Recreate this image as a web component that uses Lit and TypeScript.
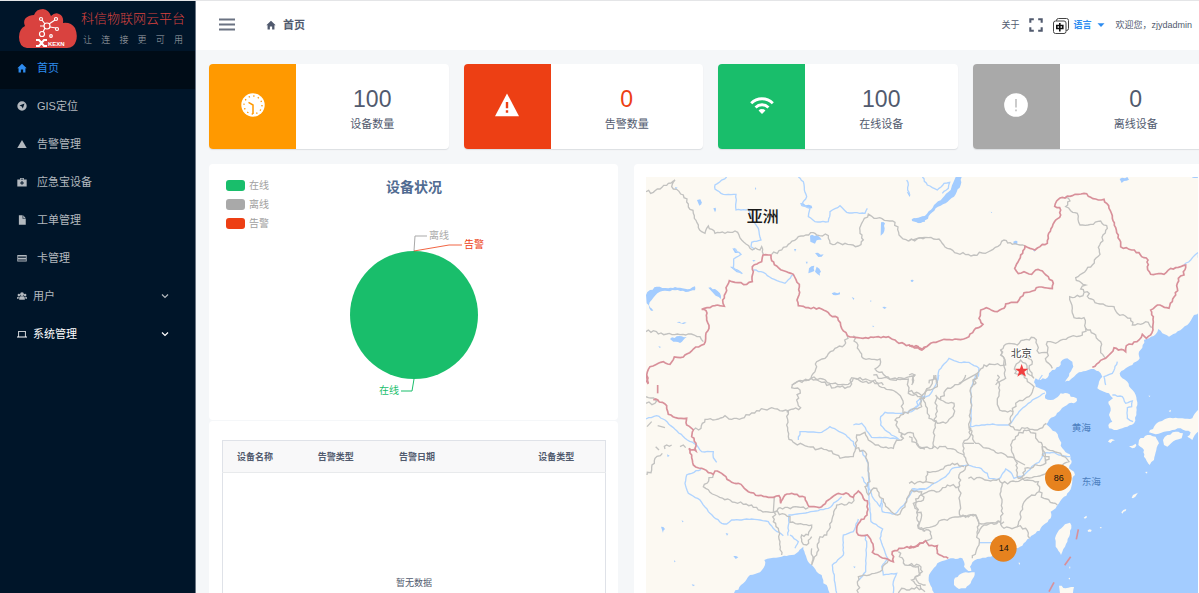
import { LitElement, html, css, svg } from "lit";
import { customElement, property } from "lit/decorators.js";

const FONT = css`"Liberation Sans", "Noto Sans CJK SC", sans-serif`;

/* ---------- icons ---------- */
const icons: Record<string, unknown> = {
  home: svg`<path d="M8 1 L15.5 8.2 H13.5 V15 H9.8 V10.5 H6.2 V15 H2.5 V8.2 H.5 Z"/>`,
  compass: svg`<path fill-rule="evenodd" d="M8 .5a7.5 7.5 0 1 0 0 15a7.5 7.5 0 0 0 0-15ZM12 4L9.3 12L7.6 8.6L4 7Z"/>`,
  warn: svg`<path d="M8 1.5 L15.5 14.5 H.5 Z"/>`,
  kit: svg`<path fill-rule="evenodd" d="M5 4V1.5h6V4h4.5v11H.5V4ZM6.3 4h3.4V2.8H6.3ZM7.200 6.500v2.200H5v1.600h2.200v2.200h1.600v-2.200H11V8.700H8.800V6.500Z"/>`,
  doc: svg`<path d="M3 .5h6V6h5v9.5H3Z M10 .5 14 5h-4Z"/>`,
  card: svg`<path fill-rule="evenodd" d="M.5 3h15v10.500H.5ZM1.800 5.500v2h12.400V5.500ZM1.800 10.500v1.600h12.400V10.500Z"/>`,
  users: svg`<circle cx="8" cy="5" r="3"/><path d="M3.500 14V11q0-2.500 2.500-2.500h4q2.500 0 2.500 2.500v3Z"/><circle cx="3" cy="6.500" r="2"/><circle cx="13" cy="6.500" r="2"/><path d="M0 12.500V11q0-2 2-2h1.200Q2.600 10 2.600 12.500ZM16 12.500V11q0-2-2-2h-1.200q.6 1 .6 3.500Z"/>`,
  laptop: svg`<path fill-rule="evenodd" d="M2 3h12v9h2v1.500H0V12h2ZM3.300 4.300V12h9.400V4.300Z"/>`,
  chevron: svg`<path d="M2 5 L8 11 L14 5" fill="none" stroke="currentColor" stroke-width="2.400"/>`,
  menu: svg`<path d="M0 2.500h16M0 7.500h16M0 12.500h16" fill="none" stroke="currentColor" stroke-width="2"/>`,
  full: svg`<path d="M1.500 5.500v-4h4M10.500 1.500h4v4M14.500 10.500v4h-4M5.500 14.500h-4v-4" fill="none" stroke="currentColor" stroke-width="2.400"/>`,
  caret: svg`<path d="M1 4.500h14L8 12Z"/>`,
  lang: svg`<g fill="none" stroke="#444"><rect x="3.500" y=".5" width="12" height="12" rx="2"/><rect x=".5" y="3" width="12.500" height="12.500" rx="2" fill="#fff"/></g><path d="M3.800 7.500h6v3h-6ZM6.800 5v8.500" fill="none" stroke="#111" stroke-width="1.600"/>`,
  clock: svg`<circle cx="8" cy="8" r="7.800"/><g class="cut"><path d="M8 14V8L5 6.300" fill="none" stroke-width="1"/><circle cx="8" cy="8" r="6" fill="none" stroke-width=".9" stroke-dasharray=".9 2.240"/></g>`,
  alarm: svg`<path d="M8 .3 L16 15.500H0Z"/><path class="cut" d="M8 6v4.200M8 11.500v1.600" fill="none" stroke-width="1.600"/>`,
  wifi: svg`<g fill="none" stroke="currentColor" stroke-width="1.900"><path d="M.8 6.800a10.200 10.200 0 0 1 14.400 0"/><path d="M3.700 9.600a6.100 6.100 0 0 1 8.600 0"/></g><path d="M8 14 5.700 11.600a3.300 3.300 0 0 1 4.600 0Z"/>`,
  exclaim: svg`<circle cx="8" cy="8" r="7.900"/><path class="cut" d="M8 4v5.600M8 11v1.200" fill="none" stroke-width=".8"/>`,
};

@customElement("ui-icon")
class UiIcon extends LitElement {
  @property() name = "home";
  static styles = css`
    :host { display: inline-flex; width: 10px; height: 10px; flex: none; }
    svg { width: 100%; height: 100%; fill: currentColor; display: block; overflow: visible; }
    .cut { stroke: var(--cut, #000); }
  `;
  render() {
    return html`<svg viewBox="0 0 16 16" aria-hidden="true">${icons[this.name]}</svg>`;
  }
}

/* ---------- map geometry, in thirds of a pixel, one list per map sheet ---------- */
type Pt = [number, number];

const parse = (s: string): Pt[] => s.trim().split(/\s+/).map((p) => p.split(",").map(Number) as Pt);

/* Breaks long straight runs into short uneven ones so that borders read as surveyed lines. */
function rough(s: string, amp: number): string {
  let seed = 7;
  const rnd = () => {
    seed = (seed * 16807) % 2147483647;
    return seed / 2147483647 - 0.5;
  };
  const pts = parse(s);
  if (pts.length === 2) return s;
  const out: string[] = [pts[0].join(",")];
  for (let i = 1; i < pts.length; i++) {
    const [ax, ay] = pts[i - 1];
    const [bx, by] = pts[i];
    const len = Math.hypot(bx - ax, by - ay);
    const n = Math.max(1, Math.round(len / 8));
    for (let k = 1; k < n; k++) {
      const t = k / n;
      const o = rnd() * amp;
      out.push(`${Math.round(ax + (bx - ax) * t - ((by - ay) / len) * o)},${Math.round(ay + (by - ay) * t + ((bx - ax) / len) * o)}`);
    }
    out.push(`${bx},${by}`);
  }
  return out.join(" ");
}

interface Sheet {
  x: number;
  y: number;
  water?: string[];
  land?: string[];
  rivers?: string[];
  borders?: string[];
  national?: string[];
}

const sheets: Sheet[] = [
  {
    x: 789, y: 594,
    water: [
      "870,-190 850,-172 835,-150 800,-125 780,-115 760,-125 748,-138 740,-122 720,-110 705,-105 700,-82 690,-70 692,-50 670,-30 650,-20 632,-5 640,10 655,20 665,40 680,60 685,90 682,120 675,145 655,155 640,160 615,165 600,160 598,150 610,140 600,120 605,100 598,80 612,70 600,55 585,50 565,40 570,20 580,5 575,-5 555,-18 530,-12 510,-8 495,5 480,18 468,20 475,10 493,-25 490,-40 475,-50 460,-45 450,-25 430,-15 420,-5 415,8 395,15 380,10 375,22 380,35 405,45 412,55 408,70 425,75 440,70 455,55 475,55 485,65 503,70 500,82 480,85 465,95 450,110 435,125 420,135 412,148 425,160 440,170 452,195 460,220 475,235 485,245 487,265 480,280 495,290 498,300 490,310 487,335 480,350 465,365 450,385 440,400 425,410 425,430 410,445 395,460 380,475 362,490 350,500 340,512 320,520 300,530 260,540 230,548 205,552 190,562 183,575 187,588 178,588 165,575 165,560 160,550 140,552 118,552 100,558 85,565 70,585 60,600 62,625 75,660 900,670 900,-190",
    ],
    land: [
      "720,172 735,155 750,140 775,130 800,128 820,130 850,130 862,110 870,98 880,98 880,165 862,175 850,195 835,185 845,172 815,160 790,165 765,170 740,178",
      "762,195 775,180 800,170 822,175 818,190 800,195 775,215 765,210",
      "690,195 715,180 740,185 750,205 742,225 735,255 722,270 705,245 705,225 688,210",
      "597,200 608,192 618,196 605,204",
      "483,443 487,460 475,500 460,530 456,540 440,515 438,490 450,465 468,448",
      "135,615 150,600 170,592 197,592 195,605 185,625 170,640 150,642 135,630",
      "450,632 470,640 495,636 490,670 455,670",
      "524,428 532,422 534,427 528,431", "536,466 548,465 546,470 537,470", "572,456 578,456 576,461",
      "637,412 652,402 650,408 640,416", "668,368 680,356 690,348 684,358 672,370", "708,291 715,290 714,296",
      "328,563 333,563 332,570", "779,108 786,104 784,112", "717,262 722,260 720,268", "480,575 484,575 483,582", "478,610 483,608 483,614",
      "660,214 670,212 680,206 682,212 670,220", "718,62 724,62 722,66",
    ],
    rivers: [
      "0,108 30,90 40,70 60,62 80,30 90,0", "200,0 185,40 188,90 185,155 235,148 300,150 330,110 370,75 408,54",
      "8,342 50,342 75,325 110,305 130,280 175,270 210,278 235,295 240,310 270,312 290,282 305,292 315,310 345,300 375,270 390,262 405,235 430,232 450,240 485,245",
      "210,503 260,503", "610,60 640,65 650,85 670,78 668,95 655,98 655,130 672,140", "400,0 390,15",
    ],
    borders: [
      "202,0 185,40 188,90 180,155 200,205 240,220 290,240 320,255",
      "265,0 272,45 265,80 272,105 312,110 300,148 325,165 355,158 385,165 405,150 412,145",
      "312,110 320,85 360,65 375,35 355,20 345,0",
      "180,155 185,180 162,205 165,235 178,270 150,300 155,400 155,425 200,420 210,450 205,478 210,510 190,550",
      "0,185 30,215 70,220 78,150 82,100 80,60 95,75 135,85 135,115 110,145 85,145 80,135",
      "70,220 100,215 140,225 165,240", "165,205 195,205",
      "345,165 320,185 305,210 315,245 325,265 322,285 328,310 345,300 348,280 410,265 400,210 385,195 380,175 345,165",
      "410,265 420,245 400,240 400,215 455,235 480,260 460,270 470,300",
      "178,310 220,310 245,318 270,312 280,325 275,365 280,400 275,440 285,460 325,455 340,395 355,370 390,350 388,320 330,310",
      "280,325 320,320 345,310 400,300 415,290", "390,350 405,370 445,390", "325,455 350,460 362,490",
      "285,440 225,450 205,478", "150,335 115,330 90,350 60,348 20,372 30,460 70,455 90,438 155,425",
      "155,425 200,420 210,445 275,440", "0,325 50,320 55,290 80,290 130,265 165,275", "50,320 75,325",
      "30,460 65,470 68,490 50,498", "0,50 30,55 40,70 55,45 85,35 75,0", "80,0 70,25 40,60 55,100 60,130 82,140",
      "95,75 110,45 160,20 170,0", "0,570 30,570 40,590 20,605 30,625 50,630", "320,255 348,270",
    ],
    national: ["0,518 20,515 50,497 60,512 85,512 85,535 118,550", "508,463 502,493", "485,545 467,571", "435,622 420,650"],
  },
  {
    x: 789, y: -36,
    water: [
      "140,36 158,36 155,60 135,95 110,115 80,130 50,165 30,175 8,168 20,160 48,152 75,120 100,100 125,75 132,55",
      "632,42 655,36 660,44 645,48 638,54", "850,33 870,33 870,38 850,38", "313,230 325,228 325,238 314,238",
      "5,345 12,344 12,350 6,350", "60,152 58,142 62,140", "372,255 380,256 376,260", "245,140 250,142 247,144",
    ],
    rivers: ["40,36 55,60 85,75 105,55 122,52 118,70 100,85", "825,300 845,285 858,270 870,262 868,278", "85,655 90,615 120,580 150,592 180,592 210,610 208,635", "625,590 610,625 585,635 590,660"],
    borders: [
      "0,228 50,217 90,222 115,250 145,265 195,270 245,257 285,225 310,238 348,243",
      "468,97 483,108 470,125 485,137 505,145 513,180 545,178 575,168 595,190 572,240 573,268 550,300 500,338 515,352 530,360 515,372 525,382",
      "525,382 512,395 482,395 490,430 495,458 525,458 530,490 560,510 575,530 575,555 590,580",
      "525,382 535,380 540,400 565,415 615,425 625,445 665,460 670,480 710,470 733,487",
      "530,490 520,510 485,515 440,535 415,530 415,563 390,565 385,540 375,518 345,525 325,540 300,535 275,555 290,600 225,600 205,625 195,660",
      "415,563 412,590 430,610", "275,555 285,590 290,640 260,660", "350,565 370,590 360,610 375,640 355,625 350,595 335,585 318,605 318,625 345,630",
      "150,655 205,625", "60,655 75,635 85,655", "0,630 18,630 10,655",
    ],
    national: [
      "0,543 25,548 40,553 65,535 105,523 155,524 180,515 200,490 222,478 210,460 215,435 232,428 265,440 285,430 290,417 325,412 345,383 370,378 390,366 430,371 433,355 418,335 400,318 380,315 368,328 345,320 328,326 317,310 330,285 348,243 378,255 400,238 415,235 417,212 430,185 440,165 455,150 452,128 437,124 443,108 460,97 490,92 525,85 560,102 585,103 600,130 610,160 622,195 632,225 635,245 660,253 690,263 705,278 717,285 715,305 725,328 765,328 778,315 800,308 830,300 823,320 825,330 808,340 805,370 800,390 790,410 780,430 745,420 725,435 733,455 732,495 725,510 712,520 700,508 690,525 670,538 652,542 650,560 615,548 605,565 590,580 570,592 550,607",
    ],
  },
  {
    x: -33, y: -36,
    water: [
      "33,390 45,375 65,365 100,370 120,366 165,372 180,364 180,376 160,380 120,376 75,380 60,392 50,405 42,420 55,437 48,437 35,415",
      "105,522 125,514 155,516 145,525 135,534 115,530", "220,368 240,372 255,385 258,402 242,392",
      "186,105 196,103 200,112 193,122", "525,212 545,210 560,224 545,226 540,236 526,230", "738,172 750,175 745,205 737,212",
      "540,264 566,268 560,275 550,276", "522,310 538,302 538,318 520,325", "545,305 558,320 555,332 540,320",
      "285,305 305,312 323,326 305,322", "292,250 312,262 300,264", "495,115 530,122 532,130 500,124",
      "830,163 870,154 870,170 850,174 832,168", "125,472 155,473 145,477", "590,385 615,382 615,388 595,390",
      "650,396 658,400 656,405", "742,426 755,428 748,432", "235,130 242,128 240,142", "477,252 484,252 480,260",
      "352,285 362,286 356,290", "828,345 836,345 834,350", "70,543 78,546 74,549", "815,80 826,90 824,96", "120,66 128,68 122,73",
      "706,406 710,408 706,411", "712,482 718,483 714,487", "512,290 518,290 516,298", "360,66 364,72 360,74",
    ],
    rivers: [
      "275,36 240,60 240,72 265,88 303,88 303,135 340,133 355,165 370,190 378,225 350,232 348,245 358,255",
      "490,36 505,50 508,75 515,95 500,120 525,130 520,155 540,170 580,170 585,140 615,122 635,142 690,145 697,130",
      "355,315 385,322 410,340 450,355 475,328", "296,250 318,268 296,282 295,308 322,326",
      "815,45 820,60 818,75 824,90",
    ],
    borders: [
      "33,80 55,82 100,55 120,45 110,65 145,90 175,145 200,200 210,205 220,183 240,205 300,198 320,225 345,250 375,255 380,245 385,268",
      "410,268 440,255 460,238 490,215 535,203 545,210 580,212 585,235 630,235 670,243 685,225 675,205 680,175 700,147 725,160 780,172 792,210 820,228 870,217",
      "33,500 55,497 70,507 160,507 195,515 205,530",
      "637,512 628,540 600,550 570,580 545,590 540,620 528,640 480,655 470,660",
      "655,512 672,555 685,580 735,582 735,600 720,612 745,628 775,645 840,630 830,660",
      "528,640 555,640 585,655 640,658 655,640 700,655 720,645 745,660",
    ],
    national: [
      "40,657 35,630 45,605 70,595 85,590 105,598 118,576 145,576 175,552 207,538 212,512 222,490 215,465 213,437 200,433 240,422 268,424 263,405 283,347 300,352 335,358 352,350 352,305 380,290 384,270 408,270 410,287 430,308 455,320 475,328 493,358 492,390 486,405 490,422 520,428 560,432 585,450 608,458 620,490 637,512 700,520 760,515 785,530 830,545 850,545 860,555 870,548",
    ],
  },
  {
    x: -33, y: 594,
    water: [
      "297,654 325,625 345,600 375,592 390,570 388,555 415,548 440,545 470,540 490,530 505,515 515,550 530,570 545,590 560,600 565,625 575,630 585,660 297,660",
      "78,455 90,462 84,474", "295,543 310,547 302,552", "96,238 104,242 98,246", "170,628 180,630 174,634", "655,574 662,575 658,580",
      "272,474 280,476 276,482", "140,435 146,440 142,442", "117,555 122,560 118,562",
    ],
    rivers: [
      "33,132 65,122 90,135 150,190 185,210 200,230 235,230 235,248 245,262",
      "198,283 155,300 150,325 160,355 195,375 220,410 260,445 275,447 290,435 350,432 400,440 420,465 445,482",
      "459,482 462,420 520,412 580,400 620,365", "490,195 495,170 560,172 585,155 625,175 655,200 662,225",
      "655,150 680,145 710,187 750,187 790,192 750,165 737,150 737,125 750,112 790,115 830,110 850,92 845,80 870,62",
      "678,225 700,265 702,340 715,370 735,395 740,372 742,410 780,417 810,385 835,345 870,342",
      "680,305 700,340 708,440 743,462 735,490 758,550 740,575 745,600 785,595 775,620 775,654",
      "670,432 655,470 625,480 625,540 592,570 605,654", "688,480 695,500 692,590 672,615", "465,480 490,500 480,520",
    ],
    borders: [
      "175,165 198,160 210,133 250,132 270,122 290,133 320,130 365,107 410,98 460,108 455,150 460,185 480,205 550,222 590,228 615,250 655,245 662,220 665,180 690,172 700,195 745,218 775,220 785,195 805,190 780,135 805,118 800,70 770,45 700,15 650,8 645,35 600,38 560,22 528,10 478,25 470,38 495,45 485,75 497,98 455,112",
      "805,190 800,175 835,175 850,215 870,222", "715,0 740,10 820,12 820,55 870,70", "805,118 830,105 860,95 855,70 870,65",
      "662,220 690,230 700,270 705,320 690,335 700,360 710,345 725,340 745,380 775,415 795,417 815,380 830,345 860,350 865,375 835,385 840,400 860,420 850,460 870,470",
      "235,298 205,335 240,360 300,382 350,390 370,405 415,412 430,400 435,398 520,398",
      "415,412 418,365", "418,412 415,440 430,460 440,540", "418,410 465,425 465,442 530,450 520,480 500,480 500,500 515,510 530,485",
      "655,367 650,385 605,390 590,440 575,480 555,485 545,540 530,570 530,520",
      "670,654 670,605 735,590 760,555", "790,530 810,570 850,575 855,600 830,615 870,650", "860,640 830,640 815,645 800,640 790,654",
      "33,85 60,85 70,75 33,65", "36,155 50,140", "68,152 90,158", "36,300 50,285 60,250 82,235", "90,222 95,210 110,210", "135,215 145,210 152,218", "62,215 72,225",
    ],
    national: [
      "33,0 40,25", "68,30 68,55",
      "55,75 68,75 95,92 100,118 130,130 155,130 155,150 175,165 170,185 183,205 183,228 162,220 170,240 175,270 200,280 235,298 240,288 260,295 290,322 310,325 340,350 370,362 400,367 432,362 437,385 450,360 470,355 510,367 522,395 560,395 580,375 610,355 640,357 655,367 670,348 685,370 697,378 696,420 675,440 665,462 670,480 697,480 715,515 712,532 735,545 758,552 775,560 772,530 800,520 840,515 870,498",
    ],
  },
];

@customElement("region-map")
class RegionMap extends LitElement {
  static styles = css`
    :host { display: block; background: #fcf9f2; }
    svg { display: block; width: 100%; height: 100%; font-family: ${FONT}; }
    .water { fill: #a3ccff; }
    .land { fill: #fcf9f2; }
    .river { fill: none; stroke: #b0d4ff; stroke-width: 4; }
    .border { fill: none; stroke: #c2c2c0; stroke-width: 4; }
    .national { fill: none; stroke: #d8909a; stroke-width: 5; }
    .continent { font-size: 48px; font-weight: 500; fill: #1a1a1a; }
    .city { font-size: 32px; fill: #444; }
    .sea { font-size: 29px; fill: #4d7fc0; }
    .halo { stroke: #fff; stroke-width: 5; paint-order: stroke; }
    .star { fill: #f04040; }
    .cluster { fill: #e6821e; }
    .count { font-size: 27px; fill: #111; text-anchor: middle; }
  `;
  render() {
    const lines = (cls: string, list: string[] | undefined, amp: number) =>
      (list ?? []).map((p) => svg`<polyline class=${cls} points=${rough(p, amp)}></polyline>`);
    const areas = (cls: string, list: string[] | undefined, amp: number) =>
      (list ?? []).map((p) => svg`<polygon class=${cls} points=${rough(p, amp)}></polygon>`);
    return html`<svg viewBox="0 0 1656 1248" preserveAspectRatio="xMinYMin slice" role="img" aria-label="设备地图">
      ${sheets.map((s) => svg`<g transform="translate(${s.x} ${s.y})">
        ${areas("water", s.water, 5)}${areas("land", s.land, 5)}
        ${lines("river", s.rivers, 3)}${lines("border", s.borders, 9)}${lines("national", s.national, 6)}
      </g>`)}
      <text class="continent" x="302" y="134">亚洲</text>
      <text class="city halo" x="1094" y="541">北京</text>
      <path class="star" d="M1127 561l5 14h15l-12 9l5 15l-13-9l-13 9l5-15l-12-9h15z"></path>
      <text class="sea" x="1277" y="763">黄海</text>
      <text class="sea" x="1307" y="923">东海</text>
      <circle class="cluster" cx="1237" cy="902" r="40"></circle>
      <text class="count" x="1238" y="911">86</text>
      <circle class="cluster" cx="1072" cy="1114" r="40"></circle>
      <text class="count" x="1073" y="1123">14</text>
    </svg>`;
  }
}

/* ---------- page ---------- */
const menu = [
  { icon: "home", label: "首页", active: true },
  { icon: "compass", label: "GIS定位" },
  { icon: "warn", label: "告警管理" },
  { icon: "kit", label: "应急宝设备" },
  { icon: "doc", label: "工单管理" },
  { icon: "card", label: "卡管理" },
  { icon: "users", label: "用户", sub: true },
  { icon: "laptop", label: "系统管理", sub: true, bright: true },
];

const stats = [
  { kind: "total", icon: "clock", value: 100, label: "设备数量" },
  { kind: "alarm", icon: "alarm", value: 0, label: "告警数量" },
  { kind: "online", icon: "wifi", value: 100, label: "在线设备" },
  { kind: "offline", icon: "exclaim", value: 0, label: "离线设备" },
];

const legend = [
  { kind: "online", label: "在线" },
  { kind: "offline", label: "离线" },
  { kind: "alarm", label: "告警" },
];

@customElement("app-root")
class AppRoot extends LitElement {
  static styles = css`
    :host {
      display: grid; grid-template-columns: 196px minmax(0, 1fr); height: 100vh; overflow: hidden;
      box-sizing: border-box; border-top: 1px solid #e4e5e7;
      background: #f5f7f9; color: #515a6e; font: 11px/16px ${FONT};
    }
    * { box-sizing: border-box; }
    a { color: inherit; text-decoration: none; }
    button { border: 0; padding: 0; margin: 0; background: none; color: inherit; font: inherit; cursor: pointer; display: flex; align-items: center; }

    .side { background: #001529; border-right: 1px solid #6b7684; color: #b3b9bf; }
    .brand { display: flex; align-items: center; gap: 4px; height: 50px; padding: 6px 10px 0 19px; }
    .logo { width: 58px; height: 40px; flex: none; }
    .logo text { font: bold 6px ${FONT}; fill: #fff; }
    .brand-text { flex: 1; }
    .name { margin: 0; font-size: 13px; line-height: 22px; font-weight: 300; color: #d9423f; white-space: nowrap; }
    .slogan { display: flex; justify-content: space-between; padding: 0 2px; font-size: 9px; line-height: 20px; font-weight: 300; color: #a5a9ae; }
    .menu { list-style: none; margin: 0; padding: 0; }
    .item { display: flex; align-items: center; height: 38px; padding: 0 26px 4px 17px; gap: 10px; }
    .item.sub { gap: 6px; }
    .item.bright { color: #fff; }
    .item.active { background: #000c17; color: #2d8cf0; }
    .item .label { flex: 1; }
    .item .arrow { width: 8px; height: 8px; }

    .main { display: flex; flex-direction: column; min-width: 0; overflow: hidden; }
    .top { display: flex; align-items: center; flex: none; height: 49px; background: #fff; padding: 0 7px 2px 23px; font-size: 9px; }
    .burger { color: #6a7282; }
    .burger ui-icon { width: 16px; height: 16px; }
    .crumb { display: flex; align-items: center; gap: 7px; margin-left: 31px; font-size: 11px; font-weight: 700; flex: 1; }
    .tools { display: flex; align-items: center; gap: 10px; }
    .tools .full { width: 14px; height: 14px; }
    .tools .lang { color: #2d8cf0; font-weight: 700; gap: 4px; }
    .tools .lang .glyph { width: 16px; height: 16px; margin-top: 3px; }
    .tools .lang .caret { width: 8px; height: 8px; margin-left: 2px; }

    .content { padding: 14px 0 0 13px; margin-right: -13px; display: grid; gap: 15px; }
    .stats { display: grid; grid-template-columns: repeat(4, minmax(0, 1fr)); gap: 15px; }
    .stat { display: flex; height: 85px; border-radius: 4px; overflow: hidden; background: #fff; box-shadow: 0 1px 1px #dcdee2; }
    .badge { width: 87px; display: grid; place-items: center; color: #fff; background: var(--tone); --cut: var(--tone); padding-bottom: 4px; }
    .badge ui-icon { width: 24px; height: 24px; }
    .figures { flex: 1; display: flex; flex-direction: column; align-items: center; justify-content: center; }
    .value { font-size: 23px; line-height: 34px; }
    .figures.alarm .value { color: #ed3f14; }
    .total { --tone: #ff9900; }
    .alarm { --tone: #ed3f14; }
    .online { --tone: #19be6b; }
    .offline { --tone: #a9a9a9; }

    .panels { display: grid; grid-template-columns: 409fr 578fr; gap: 16px; }
    .column { display: grid; gap: 1px; align-content: start; min-width: 0; }
    .panel { background: #fff; border-radius: 4px; min-width: 0; }
    .chart { display: grid; height: 256px; }
    .chart > * { grid-area: 1 / 1; }
    .pie { width: 100%; height: 256px; font-size: 10px; }
    .pie .title { font-size: 14px; font-weight: 700; fill: #516b91; text-anchor: middle; }
    .pie path { fill: none; }
    .legend { list-style: none; margin: 0; padding: 12px 17px; font-size: 10px; line-height: 19px; color: #a0a0a0; justify-self: start; }
    .legend li { display: flex; align-items: center; gap: 4px; }
    .swatch { width: 19px; height: 11px; border-radius: 3px; background: var(--tone); }
    .alerts { padding: 19px 12px 14px 13px; }
    table { width: 100%; table-layout: fixed; border-collapse: collapse; border: 1px solid #dfe2e8; font-size: 9px; }
    th { height: 32px; padding: 0 14px; text-align: left; font-weight: 700; background: #f8f8f9; border-bottom: 1px solid #e8eaec; white-space: nowrap; }
    .narrow { width: 21%; }
    .wide { width: 36%; }
    .empty { height: 220px; text-align: center; padding: 0; }
    .map { padding: 13px 14px 12px 12px; }
    region-map { height: 416px; }
  `;

  render() {
    return html`
      <aside class="side">
        <div class="brand">
          <svg class="logo" viewBox="0 0 58 40" role="img" aria-label="KEXIN">
            <path fill="#d9423f" d="M8 39Q0 38 0 28Q0 20 6 17Q3 10 10 7Q13 6 15 6Q17 0 24 0Q30 1 32 7Q36 3 40 5Q45 7 44 14Q52 13 56 19Q59 26 57 32Q55 39 48 39Z"/>
            <g fill="none" stroke="#fff" stroke-width="1.200">
              <circle cx="28" cy="17" r="3"/><circle cx="22" cy="10" r="1.500"/><circle cx="37" cy="10" r="1.500"/>
              <circle cx="38" cy="20" r="1.500"/><circle cx="23" cy="25" r="2.500"/><circle cx="32" cy="27" r="1.300"/>
              <path d="M23 11l3 4M30 15l6-4M31 18l6 1M26 19l-2 4M21 17h4"/>
              <path d="M17 31h3l5 6h3M17 37h3l5-6h3" stroke-width="2"/>
            </g>
            <text x="29" y="37">KEXN</text>
          </svg>
          <div class="brand-text">
            <p class="name">科信物联网云平台</p>
            <div class="slogan">${[..."让连接更可用"].map((c) => html`<span>${c}</span>`)}</div>
          </div>
        </div>
        <nav>
          <ul class="menu">
            ${menu.map((m) => html`<li>
              <a href="#" class="item ${m.active ? "active" : ""} ${m.sub ? "sub" : ""} ${m.bright ? "bright" : ""}">
                <ui-icon name=${m.icon}></ui-icon><span class="label">${m.label}</span>
                ${m.sub ? html`<ui-icon class="arrow" name="chevron"></ui-icon>` : ""}
              </a></li>`)}
          </ul>
        </nav>
      </aside>
      <div class="main">
        <header class="top">
          <button class="burger" aria-label="菜单"><ui-icon name="menu"></ui-icon></button>
          <a class="crumb" href="#"><ui-icon name="home"></ui-icon>首页</a>
          <div class="tools">
            <a href="#">关于</a>
            <button aria-label="全屏"><ui-icon class="full" name="full"></ui-icon></button>
            <button class="lang"><ui-icon class="glyph" name="lang"></ui-icon>语言<ui-icon class="caret" name="caret"></ui-icon></button>
            <span>欢迎您，zjydadmin</span>
          </div>
        </header>
        <main class="content">
          <section class="stats">
            ${stats.map((s) => html`<article class="stat">
              <div class="badge ${s.kind}"><ui-icon name=${s.icon}></ui-icon></div>
              <div class="figures ${s.kind}"><span class="value">${s.value}</span><span>${s.label}</span></div>
            </article>`)}
          </section>
          <section class="panels">
            <div class="column">
              <div class="panel chart">
                <svg class="pie" viewBox="0 0 409 256">
                  <text class="title" x="205" y="28">设备状况</text>
                  <circle cx="205" cy="151" r="64" fill="#19be6b"/>
                  <path d="M205 87l1-15h12" stroke="#a9a9a9"/><text x="220" y="75" fill="#a9a9a9">离线</text>
                  <path d="M205 87l35-6h13" stroke="#ed3f14" stroke-opacity=".8"/><text x="255" y="84" fill="#ed3f14">告警</text>
                  <path d="M205 215l-2 12h-11" stroke="#19be6b"/><text x="170" y="230" fill="#19be6b">在线</text>
                </svg>
                <ul class="legend">
                  ${legend.map((l) => html`<li><span class="swatch ${l.kind}"></span>${l.label}</li>`)}
                </ul>
              </div>
              <div class="panel alerts">
                <table>
                  <thead><tr><th class="narrow">设备名称</th><th class="narrow">告警类型</th><th class="wide">告警日期</th><th class="narrow">设备类型</th></tr></thead>
                  <tbody><tr><td class="empty" colspan="4">暂无数据</td></tr></tbody>
                </table>
              </div>
            </div>
            <div class="panel map"><region-map></region-map></div>
          </section>
        </main>
      </div>
    `;
  }
}
